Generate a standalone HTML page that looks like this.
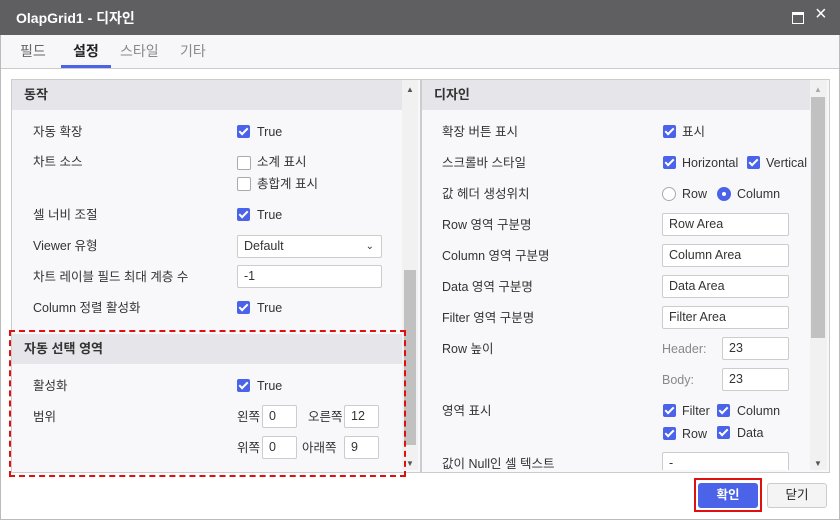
<html><head><style>
body{margin:0;width:840px;height:520px;background:#fff;font-family:"Liberation Sans","Noto Sans CJK KR",sans-serif;font-size:12.5px;color:#333;position:relative;overflow:hidden}
.a{position:absolute}
.t{position:absolute;white-space:nowrap;line-height:16px}
.cb{position:absolute;width:13px;height:13px;background:#4a63e8;border-radius:2px}
.cb:after{content:"";position:absolute;left:4px;top:1px;width:3px;height:7px;border:solid #fff;border-width:0 2px 2px 0;transform:rotate(45deg)}
.ub{position:absolute;width:12px;height:12px;border:1px solid #aaa;border-radius:2px;background:#fff}
.in{position:absolute;border:1px solid #ccc;background:#fff;border-radius:2px;line-height:21px;padding-left:6px;box-sizing:border-box;height:23px}
.hd{position:absolute;background:#e6e6ea;font-weight:bold;font-size:13px;line-height:30px;padding-left:12px;box-sizing:border-box}
</style></head><body>
<div class="a" style="left:0;top:0;width:840px;height:520px;border:1px solid #bbb;box-sizing:border-box"></div>
<div class="a" style="left:0;top:0;width:840px;height:35px;background:#5f5f61"></div>
<div class="t" style="left:16px;top:10px;color:#fff;font-weight:bold;font-size:14px">OlapGrid1 - 디자인</div>
<div class="a" style="left:792px;top:12px;width:10px;height:8px;border:1.5px solid #fff;border-top-width:3px"></div>
<div class="t" style="left:815px;top:6px;color:#fff;font-size:20px">×</div>
<div class="a" style="left:1px;top:35px;width:838px;height:33px;background:#f7f7f9;border-bottom:1px solid #ccc"></div>
<div class="t" style="left:20px;top:43px;font-size:14px;color:#666">필드</div>
<div class="t" style="left:73px;top:43px;font-size:14px;color:#222;font-weight:bold">설정</div>
<div class="t" style="left:120px;top:43px;font-size:14px;color:#888">스타일</div>
<div class="t" style="left:180px;top:43px;font-size:14px;color:#888">기타</div>
<div class="a" style="left:61px;top:65px;width:50px;height:3px;background:#4a63e8"></div>

<div class="a" style="left:11px;top:79px;width:408px;height:392px;border:1px solid #ccc;background:#f8f8fa"></div>
<div class="a" style="left:402px;top:80px;width:16px;height:390px;background:#f1f1f1"></div>
<div class="a" style="left:404px;top:270px;width:12px;height:175px;background:#c1c1c1"></div>
<div class="t" style="left:406px;top:82px;font-size:8px;color:#555">▲</div>
<div class="t" style="left:406px;top:456px;font-size:8px;color:#555">▼</div>
<div class="hd" style="left:12px;top:80px;width:390px">동작</div>
<div class="t" style="left:33px;top:124px">자동 확장</div><div class="cb" style="left:237px;top:125px"></div><div class="t" style="left:257px;top:124px">True</div>
<div class="t" style="left:33px;top:154px">차트 소스</div><div class="ub" style="left:237px;top:156px"></div><div class="t" style="left:257px;top:154px">소계 표시</div>
<div class="ub" style="left:237px;top:177px"></div><div class="t" style="left:257px;top:176px">총합계 표시</div>
<div class="t" style="left:33px;top:207px">셀 너비 조절</div><div class="cb" style="left:237px;top:208px"></div><div class="t" style="left:257px;top:207px">True</div>
<div class="t" style="left:33px;top:238px">Viewer 유형</div><div class="in" style="left:237px;top:235px;width:145px">Default<span style="position:absolute;right:7px;font-size:10px">⌄</span></div>
<div class="t" style="left:33px;top:269px">차트 레이블 필드 최대 계층 수</div><div class="in" style="left:237px;top:265px;width:145px">-1</div>
<div class="t" style="left:33px;top:300px">Column 정렬 활성화</div><div class="cb" style="left:237px;top:301px"></div><div class="t" style="left:257px;top:300px">True</div>
<div class="hd" style="left:12px;top:334px;width:390px">자동 선택 영역</div>
<div class="t" style="left:33px;top:378px">활성화</div><div class="cb" style="left:237px;top:379px"></div><div class="t" style="left:257px;top:378px">True</div>
<div class="t" style="left:33px;top:409px">범위</div>
<div class="t" style="left:237px;top:409px">왼쪽</div><div class="in" style="left:262px;top:405px;width:35px">0</div>
<div class="t" style="left:308px;top:409px">오른쪽</div><div class="in" style="left:344px;top:405px;width:35px">12</div>
<div class="t" style="left:237px;top:440px">위쪽</div><div class="in" style="left:262px;top:436px;width:35px">0</div>
<div class="t" style="left:302px;top:440px">아래쪽</div><div class="in" style="left:344px;top:436px;width:35px">9</div>
<div class="a" style="left:9px;top:330px;width:397px;height:147px;border:2px dashed #e01010;box-sizing:border-box"></div>

<div class="a" style="left:421px;top:79px;width:407px;height:392px;border:1px solid #ccc;background:#f8f8fa"></div>
<div class="a" style="left:810px;top:80px;width:17px;height:390px;background:#f1f1f1"></div>
<div class="a" style="left:811px;top:97px;width:14px;height:241px;background:#c1c1c1"></div>
<div class="t" style="left:814px;top:82px;font-size:8px;color:#aaa">▲</div>
<div class="t" style="left:814px;top:456px;font-size:8px;color:#555">▼</div>
<div class="hd" style="left:422px;top:80px;width:388px">디자인</div>
<div class="t" style="left:442px;top:124px">확장 버튼 표시</div><div class="cb" style="left:663px;top:125px"></div><div class="t" style="left:682px;top:124px">표시</div>
<div class="t" style="left:442px;top:155px">스크롤바 스타일</div><div class="cb" style="left:663px;top:156px"></div><div class="t" style="left:682px;top:155px">Horizontal</div><div class="cb" style="left:747px;top:156px"></div><div class="t" style="left:766px;top:155px">Vertical</div>
<div class="t" style="left:442px;top:186px">값 헤더 생성위치</div>
<div class="a" style="left:662px;top:187px;width:12px;height:12px;border:1px solid #aaa;border-radius:50%;background:#fff"></div><div class="t" style="left:682px;top:186px">Row</div>
<div class="a" style="left:717px;top:187px;width:14px;height:14px;border-radius:50%;background:#4a63e8"></div><div class="a" style="left:722px;top:192px;width:4px;height:4px;border-radius:50%;background:#fff"></div><div class="t" style="left:737px;top:186px">Column</div>
<div class="t" style="left:442px;top:217px">Row 영역 구분명</div><div class="in" style="left:662px;top:213px;width:127px">Row Area</div>
<div class="t" style="left:442px;top:248px">Column 영역 구분명</div><div class="in" style="left:662px;top:244px;width:127px">Column Area</div>
<div class="t" style="left:442px;top:279px">Data 영역 구분명</div><div class="in" style="left:662px;top:275px;width:127px">Data Area</div>
<div class="t" style="left:442px;top:310px">Filter 영역 구분명</div><div class="in" style="left:662px;top:306px;width:127px">Filter Area</div>
<div class="t" style="left:442px;top:341px">Row 높이</div><div class="t" style="left:662px;top:341px;color:#888">Header:</div><div class="in" style="left:722px;top:337px;width:67px">23</div>
<div class="t" style="left:662px;top:372px;color:#888">Body:</div><div class="in" style="left:722px;top:368px;width:67px">23</div>
<div class="t" style="left:442px;top:403px">영역 표시</div>
<div class="cb" style="left:663px;top:404px"></div><div class="t" style="left:682px;top:403px">Filter</div><div class="cb" style="left:717px;top:404px"></div><div class="t" style="left:737px;top:403px">Column</div>
<div class="cb" style="left:663px;top:427px"></div><div class="t" style="left:682px;top:426px">Row</div><div class="cb" style="left:717px;top:426px"></div><div class="t" style="left:737px;top:425px">Data</div>
<div class="a" style="left:422px;top:450px;width:388px;height:20px;overflow:hidden"><div class="t" style="left:20px;top:6px">값이 Null인 셀 텍스트</div><div class="in" style="left:240px;top:2px;width:127px">-</div></div>

<div class="a" style="left:694px;top:478px;width:68px;height:34px;border:2px solid #e01010;box-sizing:border-box"></div>
<div class="a" style="left:698px;top:483px;width:60px;height:25px;background:#4a63e8;border-radius:3px;color:#fff;font-weight:bold;text-align:center;line-height:25px">확인</div>
<div class="a" style="left:767px;top:483px;width:60px;height:25px;background:#f4f4f4;border:1px solid #ccc;border-radius:3px;box-sizing:border-box;text-align:center;line-height:23px;color:#222">닫기</div>
</body></html>
